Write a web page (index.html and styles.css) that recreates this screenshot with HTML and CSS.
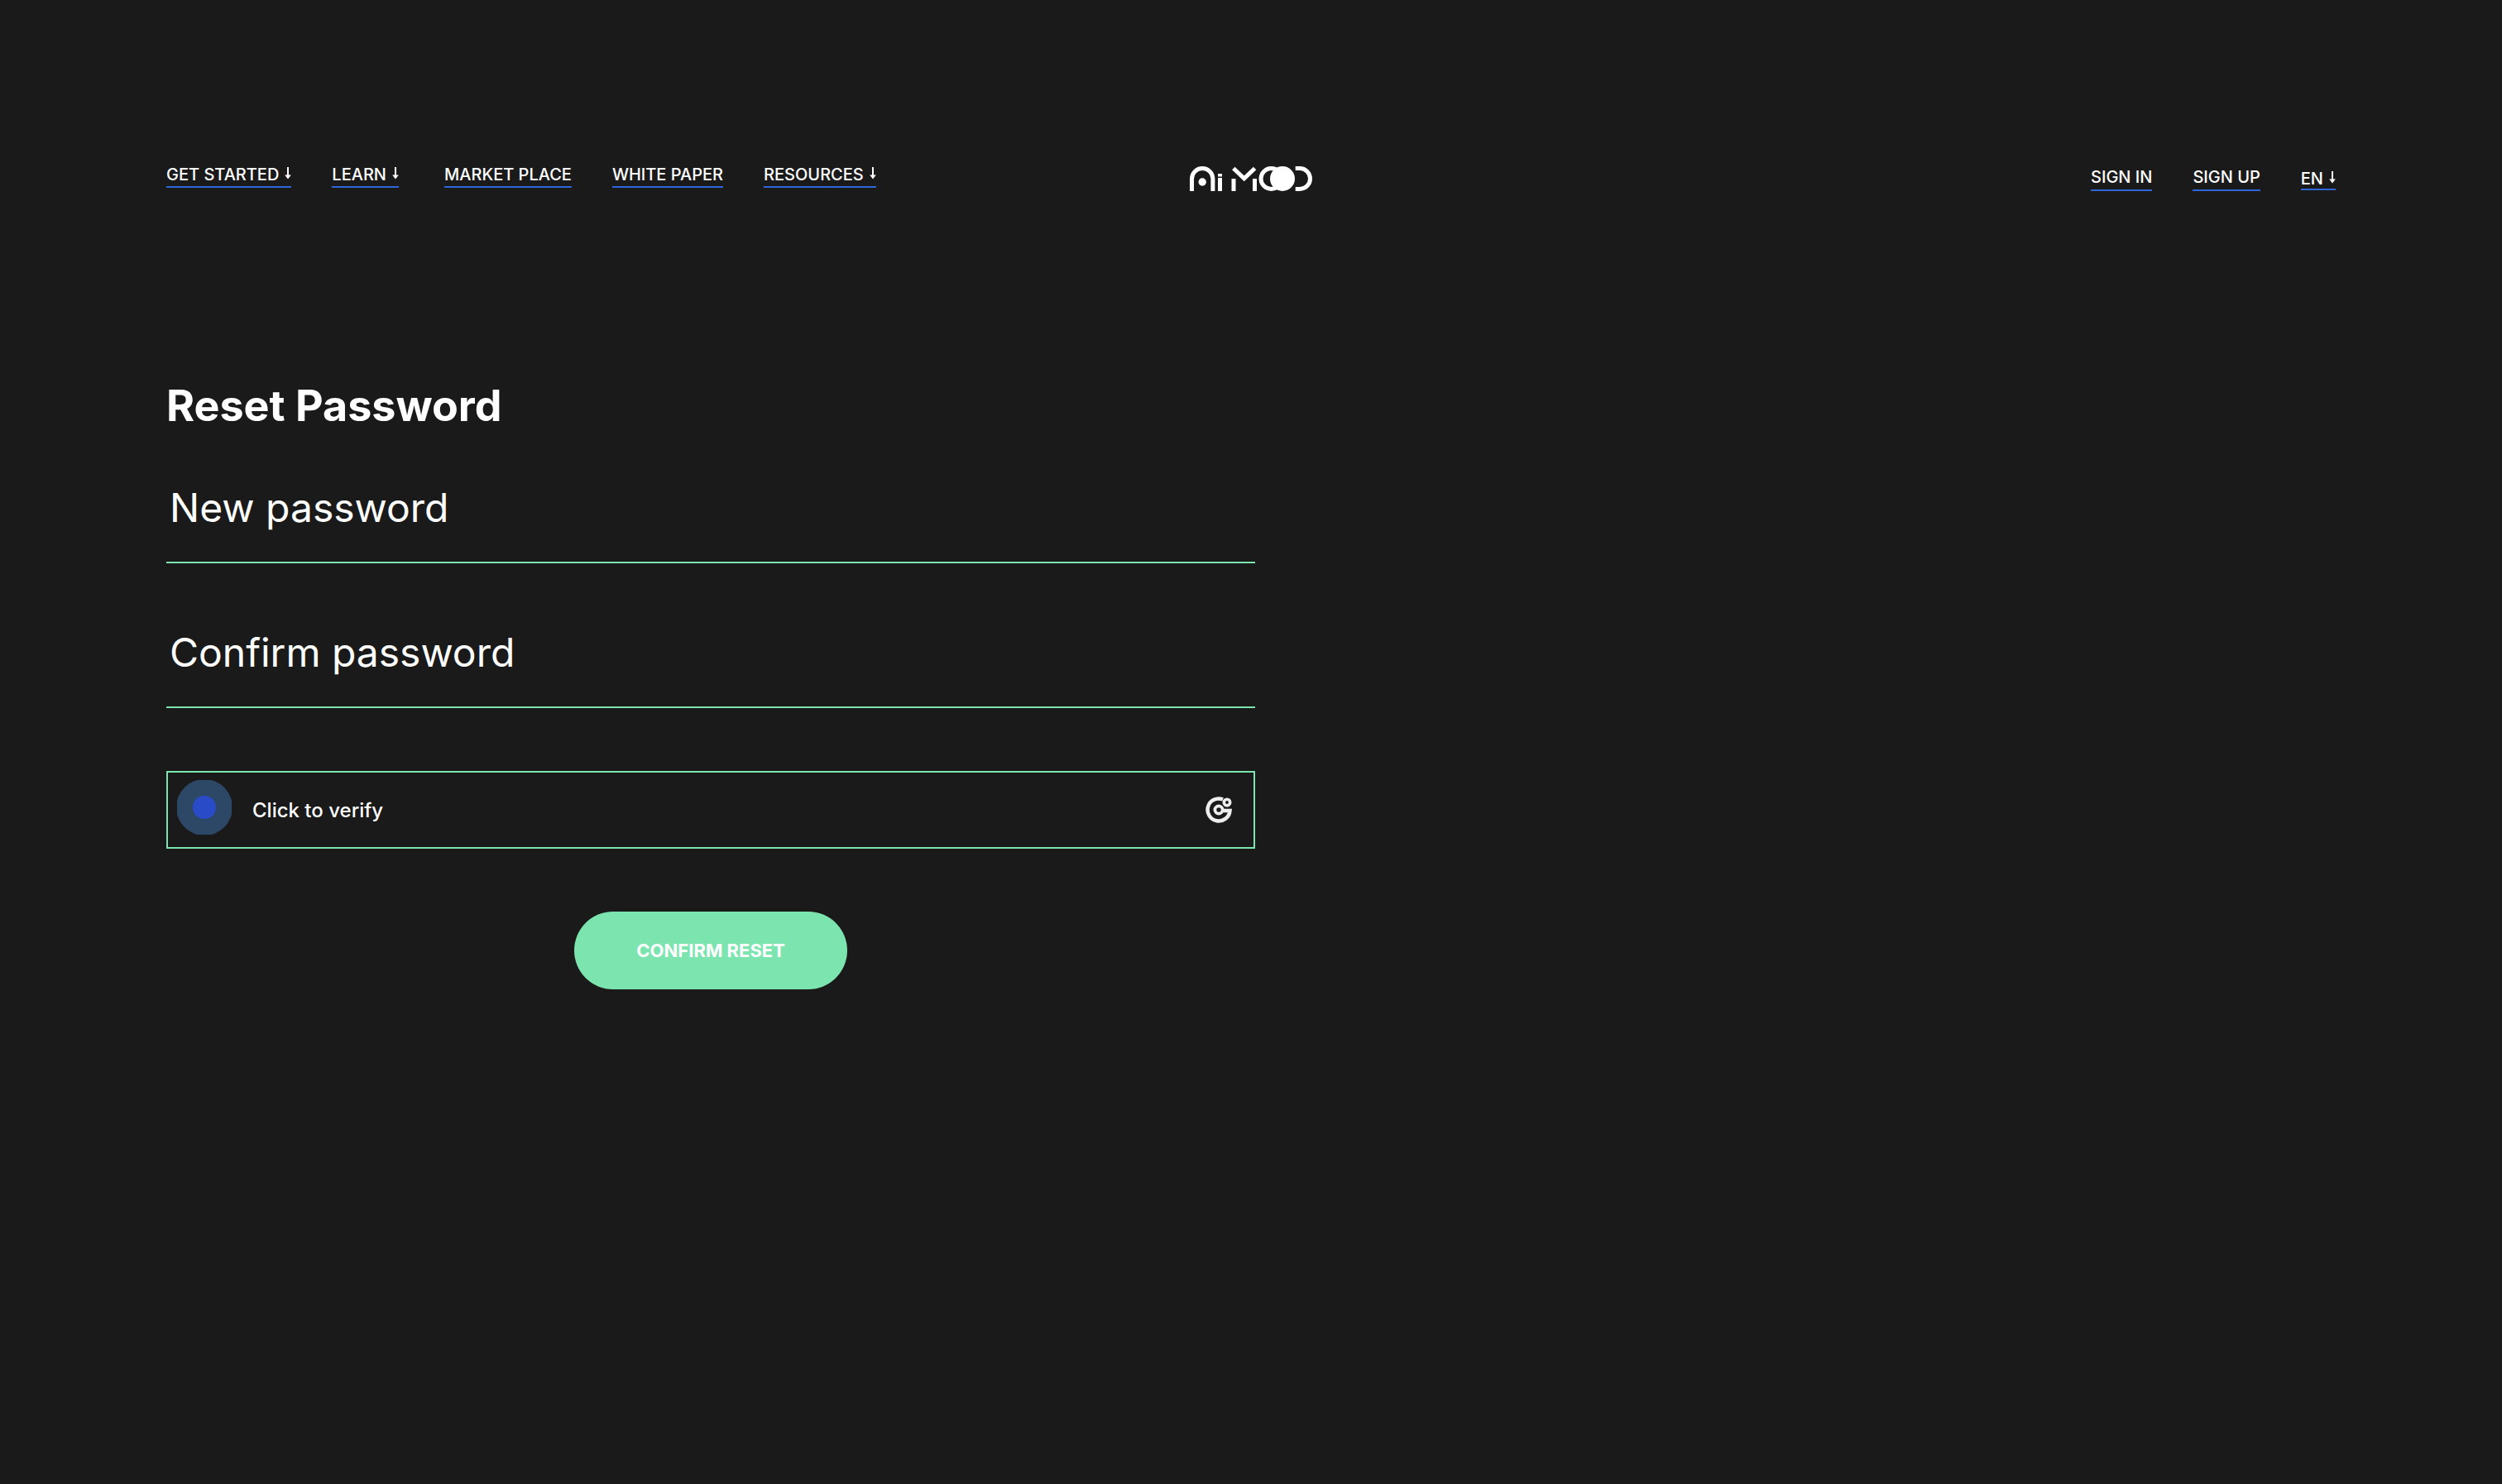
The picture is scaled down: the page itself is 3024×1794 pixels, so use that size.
FILE: index.html
```html
<!DOCTYPE html>
<html lang="en">
<head>
  <meta charset="utf-8">
  <meta name="viewport" content="width=device-width, initial-scale=1">
  <title>Reset Password</title>
  <link rel="stylesheet" href="styles.css">
</head>
<body>
  <svg class="sprite" width="0" height="0" aria-hidden="true">
    <symbol id="arrow-down" viewBox="0 0 8 15">
      <path d="M3 0h2v9.500h2.800L4 14.500.2 9.500H3z" fill="currentColor"/>
    </symbol>
  </svg>

  <header class="header">
    <nav class="nav" aria-label="Main">
      <button class="link link--menu" type="button">GET STARTED <svg class="arrow" aria-hidden="true"><use href="#arrow-down"/></svg></button>
      <button class="link link--menu link--learn" type="button">LEARN <svg class="arrow" aria-hidden="true"><use href="#arrow-down"/></svg></button>
      <a class="link" href="#market">MARKET PLACE</a>
      <a class="link" href="#paper">WHITE PAPER</a>
      <button class="link link--menu" type="button">RESOURCES <svg class="arrow" aria-hidden="true"><use href="#arrow-down"/></svg></button>
    </nav>

    <a class="logo" href="#home" aria-label="Ai MOOD">
      <svg width="148" height="30" viewBox="0 0 148 30" aria-hidden="true">
        <g fill="none" stroke="#fff" stroke-width="5">
          <path d="M2.500 30V15.200a12.700 12.700 0 0 1 25.400 0V30"/>
          <path d="M52.800 2.500 65.700 14.800 78.600 2.500"/>
          <circle cx="98.500" cy="15" r="12.500"/>
          <path d="M127.700 2.500h5.300a12.500 12.500 0 0 1 0 25h-5.300"/>
        </g>
        <g fill="#fff">
          <circle cx="15.200" cy="19" r="4.700"/>
          <path d="M34 14h5v16h-5zM34 9h5v3.500h-5zM50.500 15h5v15h-5zM76 15h5v15h-5z"/>
          <circle cx="112" cy="15" r="15"/>
        </g>
      </svg>
    </a>

    <div class="account">
      <a class="link link--account" href="#signin">SIGN IN</a>
      <a class="link link--account" href="#signup">SIGN UP</a>
      <button class="link link--menu link--language" type="button">EN <svg class="arrow" aria-hidden="true"><use href="#arrow-down"/></svg></button>
    </div>
  </header>

  <main class="main">
    <form class="form">
      <h1 class="title">Reset Password</h1>
      <input class="field" type="password" placeholder="New password" aria-label="New password">
      <input class="field" type="password" placeholder="Confirm password" aria-label="Confirm password">
      <button class="verify" type="button">
        <svg class="verify__dot" width="66" height="66" viewBox="0 0 66 66" aria-hidden="true">
          <circle cx="33" cy="33" r="34" fill="#2d4766"/>
          <circle cx="33" cy="33" r="14" fill="#294bc8"/>
        </svg>
        <span class="verify__text">Click to verify</span>
        <svg class="verify__brand" width="32" height="32" viewBox="0 0 32 32" fill="none" stroke="#eee" aria-hidden="true">
          <path d="M21 3.400A13.500 13.500 0 1 0 29.500 17H20" stroke-width="4.500"/>
          <circle cx="16" cy="16" r="4.600" stroke-width="3.800"/>
          <circle cx="26" cy="7" r="3.700" stroke-width="3.600"/>
        </svg>
      </button>
      <button class="submit" type="submit">CONFIRM RESET</button>
    </form>
  </main>
</body>
</html>
```
FILE: styles.css
```css
* {
  box-sizing: border-box;
}

body {
  margin: 0;
  min-height: 100vh;
  padding: 199px 201px 80px;
  background: #1a1a1a;
  color: #fff;
  font-family: Inter, "Liberation Sans", sans-serif;
}

button,
input {
  margin: 0;
  border: 0;
  border-radius: 0;
  background: none;
  color: inherit;
  font: inherit;
}

button {
  cursor: pointer;
}

.sprite {
  display: block;
}

/* Header */

.header {
  display: grid;
  grid-template-columns: 1fr auto 1fr;
  align-items: end;
}

.nav,
.account {
  display: flex;
  gap: 49px;
}

.nav {
  align-self: start;
}

.account {
  align-items: center;
  justify-content: flex-end;
}

.link {
  padding: 0 0 2px;
  border-bottom: 2px solid #2f66dc;
  color: #fff;
  font-size: 20px;
  font-weight: 500;
  line-height: 24px;
  text-decoration: none;
  white-space: nowrap;
}

.link--menu {
  display: flex;
  gap: 7px;
}

.link--learn {
  margin-right: 6px;
}

.link--account {
  padding-bottom: 3px;
}

.link--language {
  padding-bottom: 0;
}

.arrow {
  width: 8px;
  height: 15px;
  margin-top: 3px;
}

.logo {
  display: block;
  height: 30px;
  margin-top: 2px;
}

.logo svg {
  display: block;
}

/* Reset form */

.main {
  margin-top: 228px;
}

.form {
  display: flex;
  flex-direction: column;
  width: 50.2%;
}

.title {
  margin: 0 0 40px;
  font-size: 52px;
  font-weight: 700;
  line-height: 64px;
}

.field {
  width: 100%;
  height: 118px;
  padding: 20px 4px 36px;
  border-bottom: 2px solid #7ce5af;
  font-size: 48px;
  line-height: 60px;
  outline: 0;
}

.field + .field {
  margin-top: 57px;
}

.field::placeholder {
  color: #fff;
  opacity: 1;
}

.verify {
  display: flex;
  align-items: center;
  height: 94px;
  margin-top: 76px;
  padding: 0 26px 0 11px;
  border: 2px solid #7ce5af;
  font-size: 24px;
  font-weight: 500;
  text-align: left;
}

.verify__dot {
  margin-bottom: 6px;
}

.verify__text {
  flex: 1;
  padding-left: 25px;
}

.submit {
  align-self: center;
  width: 330px;
  height: 94px;
  margin-top: 76px;
  border-radius: 47px;
  background: #7ce5af;
  font-size: 22px;
  font-weight: 700;
}
```
